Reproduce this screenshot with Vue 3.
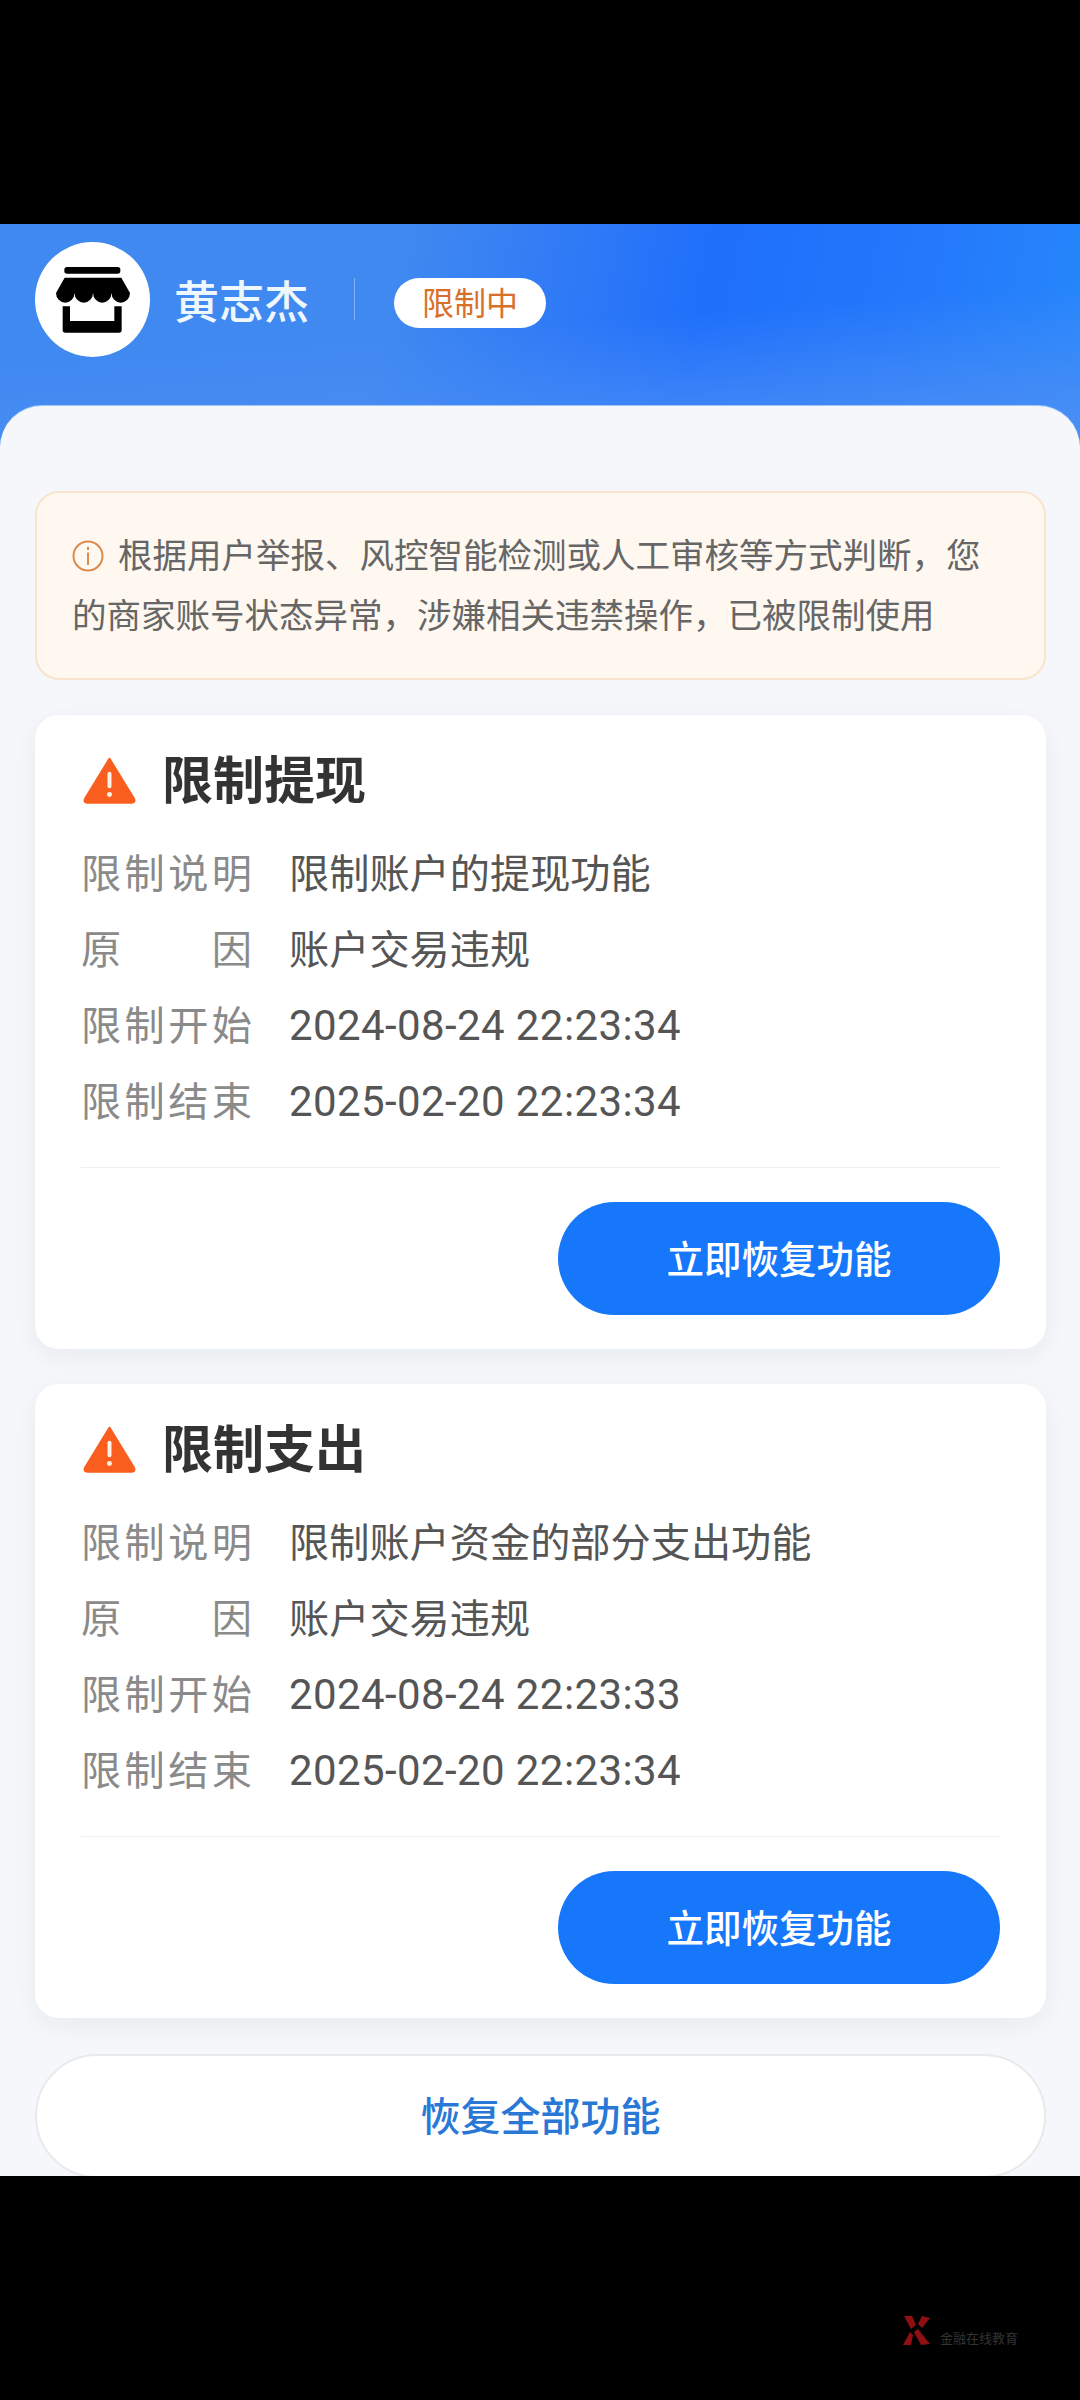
<script setup>
const cards = [
  { title: '限制提现', desc: '限制账户的提现功能', reason: '账户交易违规', start: '2024-08-24 22:23:34', end: '2025-02-20 22:23:34' },
  { title: '限制支出', desc: '限制账户资金的部分支出功能', reason: '账户交易违规', start: '2024-08-24 22:23:33', end: '2025-02-20 22:23:34' },
]
</script>

<template>
  <div class="screen">
    <div class="viewport">
      <header class="hero">
        <div class="avatar">
          <svg class="store" viewBox="108 108 222 198">
            <rect x="133" y="108" width="168" height="20" rx="8" fill="#000" />
            <path d="M134 140H304L330 186a27.75 29 0 0 1-55.5 0a27.75 29 0 0 1-55.5 0a27.75 29 0 0 1-55.5 0a27.75 29 0 0 1-55.5 0Z" fill="#000" />
            <path d="M128 226H150V270H283V226H305V297Q305 305 297 305H136Q128 305 128 297Z" fill="#000" />
          </svg>
        </div>
        <span class="name">黄志杰</span>
        <i class="sep"></i>
        <span class="tag">限制中</span>
      </header>
      <main class="panel">
        <div class="notice">
          <svg class="info" viewBox="0 0 32 32">
            <circle cx="16" cy="16" r="14.5" fill="none" stroke="#dc8a4e" stroke-width="2" />
            <rect x="15" y="7" width="2" height="3" fill="#dc8a4e" />
            <rect x="15" y="12.5" width="2" height="12.5" fill="#dc8a4e" />
          </svg>根据用户举报、风控智能检测或人工审核等方式判断，您的商家账号状态异常，涉嫌相关违禁操作，已被限制使用
        </div>
        <section v-for="c in cards" :key="c.title" class="card">
          <div class="title-row">
            <svg class="warn" viewBox="0 0 51 46">
              <path d="M25.5 3L49 41.5Q50 44.5 47 44.5H4Q1 44.5 2 41.5Z" fill="#fa5e1e" stroke="#fa5e1e" stroke-width="2.5" stroke-linejoin="round" />
              <rect x="23.6" y="15" width="3.8" height="16" rx="1.9" fill="#fff2e6" />
              <circle cx="25.5" cy="37" r="2.4" fill="#fff2e6" />
            </svg>
            <h2>{{ c.title }}</h2>
          </div>
          <div class="row"><span class="label">限制说明</span><span class="value">{{ c.desc }}</span></div>
          <div class="row"><span class="label">原因</span><span class="value">{{ c.reason }}</span></div>
          <div class="row"><span class="label">限制开始</span><span class="value num">{{ c.start }}</span></div>
          <div class="row"><span class="label">限制结束</span><span class="value num">{{ c.end }}</span></div>
          <div class="rule"></div>
          <div class="actions"><button class="primary">立即恢复功能</button></div>
        </section>
        <button class="all">恢复全部功能</button>
      </main>
    </div>
    <footer class="bottom">
      <div class="mark">
        <svg class="mark-x" viewBox="0 0 29 30">
          <path d="M2 1H10L14 10L9 14ZM20 1L28 3L20 13L16 9ZM12 17L16 14L28 29L19 30ZM8 17L11 20L9 30H1Z" fill="#8f0f14" />
        </svg>
        <span class="mark-text">金融在线教育</span>
      </div>
    </footer>
  </div>
</template>

<style scoped>
.screen {
  width: 1080px;
  height: 2400px;
  padding-top: 224px;
  box-sizing: border-box;
  background: #000;
  display: flex;
  flex-direction: column;
  font-family: "Noto Sans CJK SC", "Noto Sans", sans-serif;
}
.viewport {
  height: 1952px;
  overflow: hidden;
  background-color: #f5f7fa;
  background-image:
    linear-gradient(176deg, rgba(74, 142, 245, 0) 45%, rgba(74, 142, 245, 0.95) 88%),
    linear-gradient(102deg, #4089f0 36%, #2a76f8 56%, #1f6ffb 64%, #2478fb 82%, #2688fb 100%);
  background-size: 100% 230px;
  background-repeat: no-repeat;
  flex: none;
}
.hero {
  height: 182px;
  padding: 18px 0 0 35px;
  box-sizing: border-box;
  display: flex;
  align-items: flex-start;
}
.avatar {
  width: 115px;
  height: 115px;
  border-radius: 50%;
  background: #fff;
  display: flex;
  align-items: center;
  justify-content: center;
  flex: none;
}
.store {
  width: 74px;
  height: 66px;
}
.name {
  margin: 26px 0 0 24px;
  font-size: 45px;
  font-weight: 500;
  line-height: 64px;
  color: #eef6fe;
}
.sep {
  width: 1px;
  height: 42px;
  margin: 36px 0 0 45px;
  background: rgba(255, 255, 255, 0.35);
}
.tag {
  width: 152px;
  height: 50px;
  margin: 36px 0 0 39px;
  border-radius: 25px;
  background: #fff;
  color: #d9702a;
  font-size: 32px;
  line-height: 47px;
  text-align: center;
}
.panel {
  height: 1770px;
  padding: 85px 34px 0 35px;
  box-sizing: border-box;
  background: #f5f7fa;
  border-radius: 42px 42px 0 0;
  box-shadow: 0 -1px 0 rgba(200, 225, 255, 0.7);
}
.notice {
  height: 189px;
  padding: 30px 50px 0 35px;
  box-sizing: border-box;
  background: #fef8f0;
  border: 2px solid #f8e3cd;
  border-radius: 24px;
  color: #666;
  font-size: 34.5px;
  line-height: 60px;
}
.info {
  width: 32px;
  height: 32px;
  margin: 0 14px 0 0;
  vertical-align: -4px;
}
.card {
  margin-top: 35px;
  padding: 28px 46px 34px 46px;
  background: #fff;
  border-radius: 24px;
  box-shadow: 0 8px 26px rgba(40, 50, 70, 0.06);
}
.title-row {
  height: 74px;
  margin-bottom: 18px;
  display: flex;
  align-items: center;
}
.warn {
  width: 53px;
  height: 48px;
  margin: 0 26px 0 2px;
  flex: none;
}
h2 {
  margin: 0 0 5px;
  font-size: 51px;
  font-weight: 700;
  line-height: 69px;
  color: #333;
}
.row {
  height: 76px;
  display: flex;
  align-items: center;
  font-size: 40.2px;
}
.label {
  width: 171px;
  margin: -5px 37px 0 0;
  color: #8a8a8a;
  text-align: justify;
  text-align-last: justify;
  flex: none;
}
.value {
  margin-top: -5px;
  color: #555;
}
.num {
  margin-top: 0;
  font-family: Roboto, sans-serif;
  font-size: 42px;
  letter-spacing: 0.4px;
}
.rule {
  height: 1px;
  margin-top: 28px;
  background: #eeeff1;
}
.actions {
  margin-top: 34px;
  display: flex;
  justify-content: flex-end;
}
.primary {
  width: 442px;
  height: 113px;
  padding: 0 0 5px;
  border: 0;
  border-radius: 57px;
  background: #1677fb;
  color: #fff;
  font: 500 37.5px "Noto Sans CJK SC", sans-serif;
}
.all {
  display: block;
  width: 100%;
  height: 124px;
  margin-top: 36px;
  padding: 0 0 4px;
  border: 2px solid #e8e9eb;
  border-radius: 62px;
  background: #fff;
  color: #2a78d6;
  font: 500 40px "Noto Sans CJK SC", sans-serif;
}
.bottom {
  height: 224px;
  position: relative;
}
.mark {
  position: absolute;
  left: 902px;
  top: 139px;
  display: flex;
  align-items: flex-end;
  gap: 9px;
}
.mark-x {
  width: 29px;
  height: 30px;
}
.mark-text {
  font-size: 13px;
  line-height: 14px;
  color: #333;
}
</style>
